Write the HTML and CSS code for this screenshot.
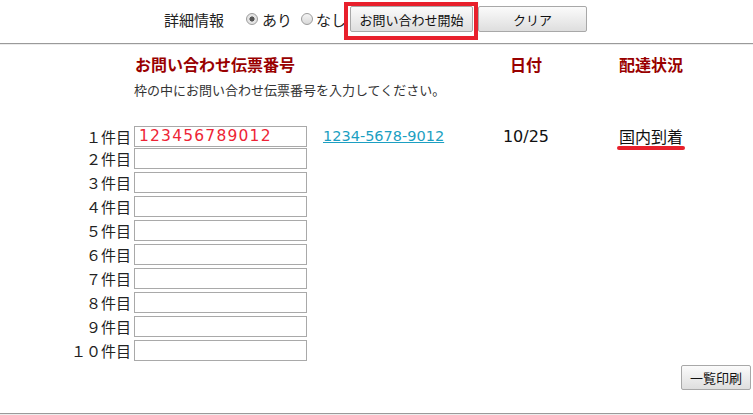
FILE: index.html
```html
<!DOCTYPE html>
<html lang="ja">
<head>
    <meta charset="UTF-8">
    <meta name="viewport" content="width=device-width, initial-scale=1.0">
    <title>お問い合わせ</title>
    <link rel="stylesheet" href="styles.css">
</head>
<body>
    <!-- 検索条件 -->
    <form class="topbar">
        <span class="topbar-label">詳細情報</span>
        <label class="choice"><input type="radio" name="detail" checked>あり</label>
        <label class="choice"><input type="radio" name="detail">なし</label>
        <span class="highlight"><button type="button" class="btn btn-start">お問い合わせ開始</button></span>
        <button type="reset" class="btn btn-clear">クリア</button>
    </form>
    <hr class="rule">

    <!-- 伝票番号一覧 -->
    <section class="track">
        <div class="track-line track-head">
            <h2 class="head-title">お問い合わせ伝票番号</h2>
            <h2 class="head-date">日付</h2>
            <h2 class="head-status">配達状況</h2>
        </div>
        <p class="track-note">枠の中にお問い合わせ伝票番号を入力してください。</p>

        <div class="track-rows">
            <div class="track-line">
                <span class="row-label">１件目</span>
                <input type="text" class="slip" value="123456789012">
                <a href="#" class="slip-link">1234-5678-9012</a>
                <span class="row-date">10/25</span>
                <span class="row-status"><span class="status-mark">国内到着</span></span>
            </div>
            <div class="track-line"><span class="row-label">２件目</span><input type="text" class="slip"></div>
            <div class="track-line"><span class="row-label">３件目</span><input type="text" class="slip"></div>
            <div class="track-line"><span class="row-label">４件目</span><input type="text" class="slip"></div>
            <div class="track-line"><span class="row-label">５件目</span><input type="text" class="slip"></div>
            <div class="track-line"><span class="row-label">６件目</span><input type="text" class="slip"></div>
            <div class="track-line"><span class="row-label">７件目</span><input type="text" class="slip"></div>
            <div class="track-line"><span class="row-label">８件目</span><input type="text" class="slip"></div>
            <div class="track-line"><span class="row-label">９件目</span><input type="text" class="slip"></div>
            <div class="track-line"><span class="row-label">１０件目</span><input type="text" class="slip"></div>
        </div>
    </section>

    <div class="print-row">
        <button type="button" class="btn btn-print">一覧印刷</button>
    </div>
    <hr class="rule">
</body>
</html>
```

FILE: styles.css
```css
/* 全体 */
body {
    margin: 0;
    font-family: "DejaVu Sans", "Noto Sans CJK JP", sans-serif;
    color: #222;
    background-color: #fff;
}
.rule {
    margin: 0;
    height: 0;
    border: 0;
    border-top: 1px solid #9a9a9a;
    border-bottom: 1px solid #ececec;
}

/* 上部フォーム */
.topbar {
    display: flex;
    align-items: center;
    height: 26px;
    margin: 0;
    padding: 6px 0 11px 164px;
    font-size: 15px;
}
.topbar-label {
    margin-right: 22px;
}
.choice {
    display: flex;
    align-items: center;
}
.choice + .choice {
    margin-left: 9px;
}
.choice input {
    appearance: none;
    width: 12px;
    height: 12px;
    margin: 0 4px 0 0;
    border: 1px solid #9c9c9c;
    border-radius: 50%;
    background: linear-gradient(#f4f4f4, #d9d9d9);
}
.choice + .choice input {
    margin-right: 3px;
}
.choice input:checked {
    background: radial-gradient(circle, #555 0 2.3px, #e4e4e4 2.8px);
}
.highlight {
    position: relative;
    margin-left: 4px;
    display: flex;
}
.highlight::after {
    content: "";
    position: absolute;
    top: -4px;
    left: -6px;
    right: -5px;
    bottom: -8px;
    border: 4px solid #e8202c;
    pointer-events: none;
}
.btn {
    height: 26px;
    padding: 0;
    font-family: "Noto Sans CJK JP", sans-serif;
    font-size: 13px;
    color: #111;
    border: 1px solid #a8a8a8;
    border-radius: 2px;
    background: linear-gradient(#fbfbfb, #dedede);
    cursor: pointer;
}
.btn:hover {
    background: linear-gradient(#fff, #e8e8e8);
}
.btn-start {
    width: 123px;
}
.btn-clear {
    width: 109px;
    margin-left: 5px;
}

/* 伝票番号 */
.track-line {
    display: grid;
    grid-template-columns: 134px 173px 166px 106px 144px;
    align-items: center;
}
.track-head {
    margin-top: 11px;
    height: 20px;
}
.track-head h2 {
    margin: 0;
    font-size: 16px;
    line-height: 20px;
    font-weight: bold;
    color: #990000;
}
.head-title {
    grid-column: 2 / 4;
    padding-left: 1px;
}
.head-date {
    grid-column: 4;
    text-align: center;
}
.head-status {
    grid-column: 5;
    text-align: center;
}
.track-note {
    margin: 6px 0 24px;
    padding-left: 134px;
    font-size: 13px;
    line-height: 18px;
    color: #333;
}
.track-rows .track-line {
    height: 21px;
    margin-bottom: 3px;
}
.row-label {
    padding-right: 3px;
    text-align: right;
    font-size: 15px;
    color: #222;
}
.slip {
    box-sizing: border-box;
    width: 173px;
    height: 21px;
    margin: 0;
    padding: 0 4px;
    border: 1px solid #a9a9a9;
    font-family: "DejaVu Sans", sans-serif;
    font-size: 15.5px;
    letter-spacing: 1.2px;
    color: #ee2436;
    outline: none;
}
.slip-link {
    padding-left: 16px;
    font-size: 14.5px;
    color: #1c9fc2;
}
.row-date {
    text-align: center;
    font-size: 16px;
    color: #111;
}
.row-status {
    text-align: center;
    font-size: 16px;
    color: #111;
}
.status-mark {
    position: relative;
}
.status-mark::after {
    content: "";
    position: absolute;
    left: -2px;
    right: -2px;
    bottom: -3px;
    height: 4px;
    border-radius: 2px;
    background-color: #e8202c;
}

/* 印刷 */
.print-row {
    display: flex;
    justify-content: flex-end;
    padding: 1px 2px 23px 0;
}
.btn-print {
    width: 70px;
    height: 25px;
}
```
